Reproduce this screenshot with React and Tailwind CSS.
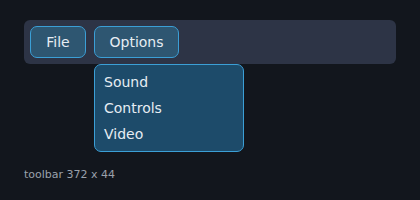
import React, { useState } from 'react';

const font = { fontFamily: '"DejaVu Sans", sans-serif' };

const App = () => {
  const [open, setOpen] = useState(true);

  return (
    <div className="w-[420px] h-[200px] bg-[#12161d] px-6 pt-5" style={font}>
      {/* toolbar */}
      <div className="relative w-[372px] h-[44px] rounded-md bg-[#2d3446] flex items-center gap-2 px-1.5">
        <button className="w-[56px] h-8 rounded-[7px] border-[1.5px] border-[#3b9fd6] bg-[#2e5671] text-[14px] text-[#e6edf3]">
          File
        </button>
        <button
          onClick={() => setOpen(!open)}
          className="w-[85px] h-8 rounded-[7px] border-[1.5px] border-[#3b9fd6] bg-[#2e5671] text-[14px] text-[#e6edf3]"
        >
          Options
        </button>

        {/* dropdown */}
        {open && (
          <div className="absolute left-[70px] top-[44px] w-[150px] rounded-[7px] border-[1.5px] border-[#3b9fd6] bg-[#1d4b6a] py-[4px] flex flex-col">
            <div className="h-[26px] px-[9px] flex items-center text-[14px] text-[#e6edf3]">Sound</div>
            <div className="h-[26px] px-[9px] flex items-center text-[14px] text-[#e6edf3]">Controls</div>
            <div className="h-[26px] px-[9px] flex items-center text-[14px] text-[#e6edf3]">Video</div>
          </div>
        )}
      </div>

      <p className="mt-[103px] text-[11px] text-[#9aa1ab]">toolbar 372 x 44</p>
    </div>
  );
};

export default App;
